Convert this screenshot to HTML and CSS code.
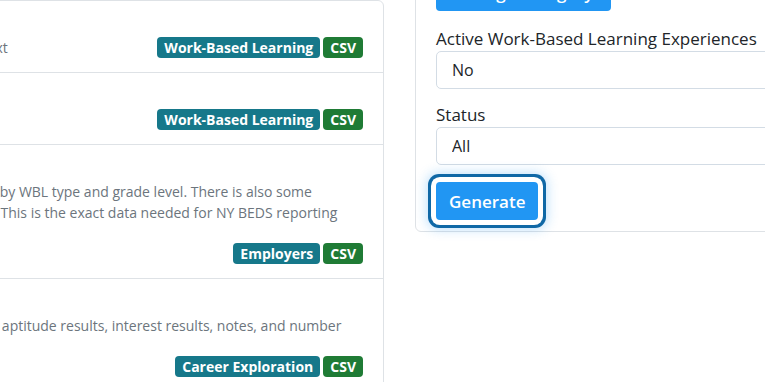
FILE: index.html
```html
<!DOCTYPE html>
<html lang="en">
<head>
    <meta charset="UTF-8">
    <meta name="viewport" content="width=device-width, initial-scale=1.0">
    <title>Reports</title>
    <link rel="stylesheet" href="styles.css">
</head>
<body>

    <div class="layout">
        <section class="reports">
            <h1 class="page-title">Reports</h1>
            <p class="page-intro">Pick a report from the list and download it.</p>

            <div class="report-list">
                <div class="report-item">
                    <div class="report-name">WBL Hours Log</div>
                    <div class="report-meta">
                        <p class="report-desc">Logged hours from students, with context</p>
                        <div class="report-tags">
                            <span class="tag tag-topic">Work-Based Learning</span>
                            <span class="tag tag-format">CSV</span>
                        </div>
                    </div>
                </div>

                <div class="report-item">
                    <div class="report-name">WBL Placements</div>
                    <div class="report-meta">
                        <p class="report-desc">Every current placement.</p>
                        <div class="report-tags">
                            <span class="tag tag-topic">Work-Based Learning</span>
                            <span class="tag tag-format">CSV</span>
                        </div>
                    </div>
                </div>

                <div class="report-item">
                    <div class="report-name">BEDS Summary</div>
                    <div class="report-meta">
                        <p class="report-desc">Number of students in each experience, by WBL type and grade level. There is also some<br>detail on hours logged for every job site. This is the exact data needed for NY BEDS reporting</p>
                        <div class="report-tags">
                            <span class="tag tag-topic">Employers</span>
                            <span class="tag tag-format">CSV</span>
                        </div>
                    </div>
                </div>

                <div class="report-item">
                    <div class="report-name">Career Exploration</div>
                    <div class="report-meta">
                        <p class="report-desc">Career exploration data by student, with aptitude results, interest results, notes, and number</p>
                        <div class="report-tags">
                            <span class="tag tag-topic">Career Exploration</span>
                            <span class="tag tag-format">CSV</span>
                        </div>
                    </div>
                </div>
            </div>
        </section>

        <aside class="filters">
            <div class="filters-header">Report Options</div>
            <form class="filters-body">
                <button type="button" class="btn">Change Category</button>

                <div class="field">
                    <label for="activeWbl">Active Work-Based Learning Experiences</label>
                    <select id="activeWbl">
                        <option>No</option>
                        <option>Yes</option>
                    </select>
                </div>

                <div class="field">
                    <label for="status">Status</label>
                    <select id="status">
                        <option>All</option>
                        <option>Active</option>
                        <option>Inactive</option>
                    </select>
                </div>

                <button type="button" class="btn btn-generate">Generate</button>
            </form>
        </aside>
    </div>

</body>
</html>
```

FILE: styles.css
```css
body {
    font-family: "Open Sans", "DejaVu Sans", sans-serif;
    margin: 0;
    padding: 0;
    background-color: #fff;
    color: #212529;
    overflow: hidden;
}
.layout {
    display: grid;
    grid-template-columns: 670px 400px;
    column-gap: 31px;
    align-items: start;
    margin-top: -97px;
    margin-left: -286px;
}
.page-title {
    font-size: 28px;
    line-height: 34px;
    margin: 0 0 8px;
}
.page-intro {
    font-size: 14px;
    line-height: 21px;
    margin: 0 0 34px;
    color: #6c757d;
}
.report-list {
    border: 1px solid #dee2e6;
    border-radius: 6px;
    background-color: #fff;
}
.report-item {
    padding: 12px 20px 14px;
    border-bottom: 1px solid #dee2e6;
}
.report-item:last-child {
    border-bottom: none;
}
.report-name {
    font-size: 16px;
    font-weight: 700;
    line-height: 24px;
}
.report-meta {
    display: flex;
    flex-wrap: wrap;
    align-items: flex-end;
    row-gap: 20px;
    column-gap: 12px;
}
.report-desc {
    margin: 0;
    font-size: 14px;
    line-height: 21px;
    color: #6c757d;
    white-space: nowrap;
}
.report-tags {
    display: flex;
    gap: 3px;
    margin-left: auto;
}
.tag {
    display: inline-block;
    padding: 0 7px;
    font-size: 14px;
    font-weight: 700;
    line-height: 21px;
    color: #fff;
    border-radius: 4px;
}
.tag-topic {
    background-color: #16788a;
}
.tag-format {
    background-color: #1f7b35;
}
.filters {
    border: 1px solid #dee2e6;
    border-radius: 6px;
    background-color: #fff;
}
.filters-header {
    padding: 12px 20px;
    font-size: 16px;
    font-weight: 700;
    line-height: 24px;
    border-bottom: 1px solid #dee2e6;
}
.filters-body {
    display: flex;
    flex-direction: column;
    align-items: flex-start;
    padding: 20px 20px 11px;
}
.field {
    align-self: stretch;
    margin-top: 16px;
}
.field + .field {
    margin-top: 14px;
}
label {
    display: block;
    font-size: 17px;
    line-height: 24px;
    color: #212529;
}
select {
    display: block;
    width: 100%;
    height: 38px;
    padding: 0 15px;
    font-family: inherit;
    font-size: 16px;
    color: #212529;
    background-color: #fff;
    border: 1px solid #d3dce5;
    border-radius: 5px;
    appearance: none;
    -webkit-appearance: none;
}
.btn {
    height: 38px;
    padding: 0 18px;
    font-family: inherit;
    font-size: 17px;
    font-weight: 600;
    color: #fff;
    background-color: #2196f3;
    border: none;
    border-radius: 4px;
    cursor: pointer;
}
.btn-generate {
    margin-top: 17px;
    padding: 0 13px;
    box-shadow: 0 0 0 5px #fff, 0 0 0 8px #0f68a6, 0 0 12px 9px rgba(33, 150, 243, 0.3);
}
```
